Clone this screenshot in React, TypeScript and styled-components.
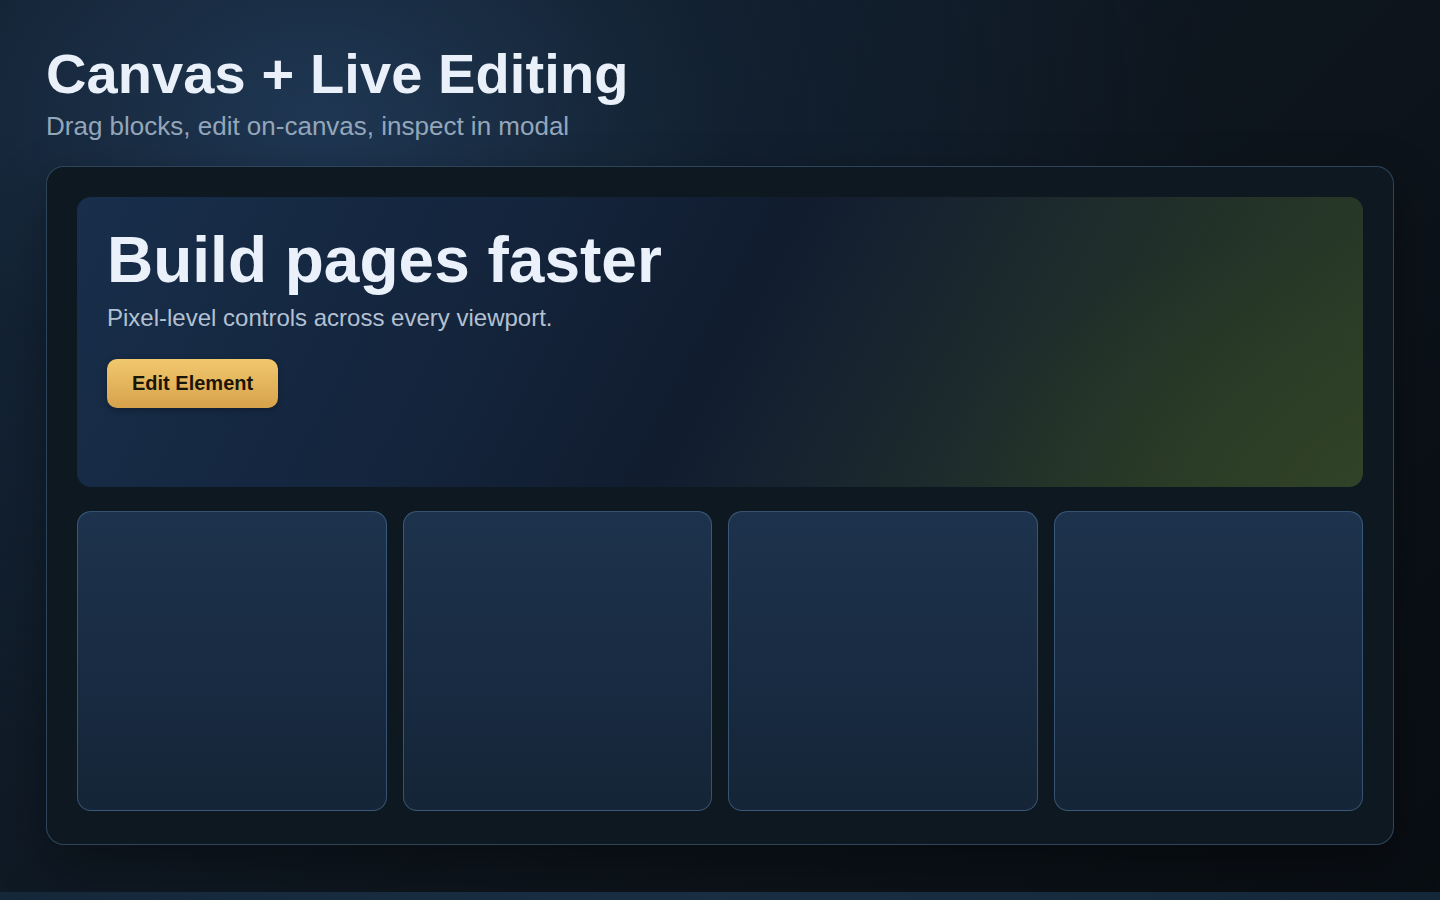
import React from 'react';
import styled, { createGlobalStyle } from 'styled-components';

const GlobalStyle = createGlobalStyle`
  html, body {
    margin: 0;
    padding: 0;
    background: #0a1017;
  }
  body {
    font-family: 'Liberation Sans', Arial, sans-serif;
    color: #e8eef7;
  }
`;

const Page = styled.div`
  min-height: 100vh;
  background:
    radial-gradient(ellipse 900px 650px at 320px 120px, #1f3753 0%, rgba(20, 36, 54, 0.6) 45%, rgba(10, 16, 23, 0) 100%),
    linear-gradient(135deg, #142335 0%, #0d151d 55%, #090d12 100%);
`;

const Content = styled.div`
  padding: 40px 46px 47px;
`;

const Header = styled.header`
  display: flex;
  flex-direction: column;
  gap: 4px;
  margin-bottom: 24px;
`;

const PageTitle = styled.h1`
  margin: 0;
  font-size: 56px;
  line-height: 1.2;
  font-weight: 700;
  letter-spacing: 0.1px;
  color: #e9f0f9;
`;

const PageSubtitle = styled.p`
  margin: 0;
  font-size: 26px;
  line-height: 1.2;
  color: #94a6ba;
`;

const Canvas = styled.section`
  display: flex;
  flex-direction: column;
  gap: 24px;
  padding: 30px 30px 33px;
  border: 1px solid rgba(86, 124, 163, 0.45);
  border-radius: 18px;
  background: linear-gradient(180deg, #0d1820 0%, #0e1820 100%);
  box-shadow: 0 20px 50px rgba(0, 0, 0, 0.35);
`;

const Hero = styled.div`
  height: 290px;
  box-sizing: border-box;
  padding: 28px 30px;
  border-radius: 14px;
  background:
    radial-gradient(ellipse 420px 260px at 100% 100%, rgba(50, 68, 38, 0.7) 0%, rgba(50, 68, 38, 0) 100%),
    linear-gradient(
      118deg,
      #182e4a 0%,
      #14253d 30%,
      #111c2f 50%,
      #18252f 62%,
      #1d2b2c 70%,
      #243427 84%,
      #2c3e28 100%
    );
`;

const HeroTitle = styled.h2`
  margin: 0;
  font-size: 64px;
  line-height: 1.1;
  font-weight: 700;
  color: #eaf1fa;
`;

const HeroText = styled.p`
  margin: 8px 0 26px;
  font-size: 24px;
  line-height: 1.2;
  color: #b3c1d2;
`;

const EditButton = styled.button`
  display: inline-flex;
  align-items: center;
  height: 49px;
  padding: 0 25px;
  border: none;
  border-radius: 10px;
  background: linear-gradient(180deg, #f1c86d 0%, #d6a24b 100%);
  box-shadow: 0 2px 6px rgba(0, 0, 0, 0.3);
  font-family: 'Liberation Sans', Arial, sans-serif;
  font-size: 20px;
  font-weight: 700;
  color: #1b1508;
  cursor: pointer;
`;

const CardRow = styled.div`
  display: grid;
  grid-template-columns: repeat(4, 1fr);
  gap: 16px;
`;

const Card = styled.div`
  height: 300px;
  box-sizing: border-box;
  border: 1px solid rgba(82, 120, 160, 0.55);
  border-radius: 14px;
  background: linear-gradient(180deg, #1d324c 0%, #182b42 55%, #152537 100%);
`;

const BottomBar = styled.div`
  height: 40px;
  background: linear-gradient(90deg, #15283a 0%, #192e43 50%, #15283a 100%);
`;

export default function App() {
  return (
    <Page>
      <GlobalStyle />
      <Content>
        <Header>
          <PageTitle>Canvas + Live Editing</PageTitle>
          <PageSubtitle>Drag blocks, edit on-canvas, inspect in modal</PageSubtitle>
        </Header>
        <Canvas>
          <Hero>
            <HeroTitle>Build pages faster</HeroTitle>
            <HeroText>Pixel-level controls across every viewport.</HeroText>
            <EditButton>Edit Element</EditButton>
          </Hero>
          <CardRow>
            {[0, 1, 2, 3].map((i) => (
              <Card key={i} />
            ))}
          </CardRow>
        </Canvas>
      </Content>
      <BottomBar />
    </Page>
  );
}
